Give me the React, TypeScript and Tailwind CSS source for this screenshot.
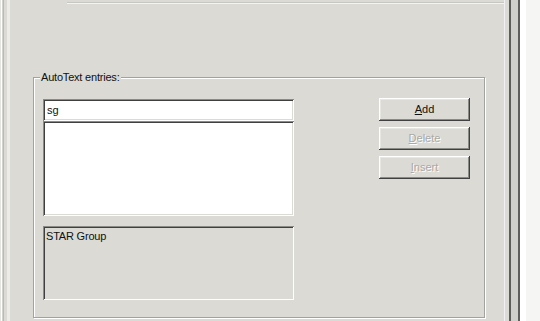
const FONT = "font-['Liberation_Sans',Arial,sans-serif]";

const RAISED =
  "shadow-[inset_-1px_-1px_#404040,inset_1px_1px_#ffffff,inset_-2px_-2px_#8a8a86,inset_2px_2px_#e6e6e2]";
const SUNKEN =
  "shadow-[inset_1px_1px_#8a8a86,inset_-1px_-1px_#ffffff,inset_2px_2px_#404040,inset_-2px_-2px_#dbdad5]";

function Btn({ label, u, rest, disabled }: { label?: string; u: string; rest: string; disabled?: boolean }) {
  return (
    <div
      aria-label={label}
      className={`flex h-[23px] w-[91px] items-center justify-center bg-[#dbdad5] text-[11px] ${RAISED} ${
        disabled ? "text-[#a9a9a5] [text-shadow:1px_1px_0_#ffffff]" : "text-[#111]"
      }`}
    >
      <span>
        <span className="underline underline-offset-1">{u}</span>
        {rest}
      </span>
    </div>
  );
}

export default function App() {
  return (
    <div className={`flex h-[321px] w-[540px] overflow-hidden bg-[#dbdad5] ${FONT}`}>
      {/* left window edge */}
      <div className="flex h-full w-[10px] shrink-0">
        <div className="w-px bg-[#e4e4e1]" />
        <div className="w-px bg-white" />
        <div className="w-px bg-[#d2d2ce]" />
        <div className="w-px bg-[#b9b9b5]" />
        <div className="w-[3px] bg-[#dbdad5]" />
        <div className="w-[3px] bg-[#ecece9]" />
      </div>

      {/* dialog page */}
      <div className="flex h-full w-[495px] shrink-0 flex-col border-r border-[#f1f1ef]">
        <div className="ml-[57px] mt-[2px] h-[2px] border-t border-[#c6c6c2] border-b border-b-[#f3f3f1]" />

        <div className="relative ml-[23px] mt-[73px] h-[241px] w-[452px] border border-[#a2a29e] shadow-[inset_1px_1px_#ffffff,1px_1px_#ffffff]">
          <span className="absolute left-[6px] top-[-8px] bg-[#dbdad5] px-px text-[11px] leading-[14px] tracking-[-0.2px] text-[#111]">
            AutoText entries:
          </span>

          <div className="flex pl-[9px] pt-[20px]">
            <div className="flex w-[251px] flex-col pt-px">
              <div className={`flex h-[22px] items-center bg-white pl-[4px] text-[11px] text-[#111] ${SUNKEN}`}>sg</div>
              <div className={`h-[95px] bg-white ${SUNKEN}`} />
              <div className={`mt-[10px] h-[74px] bg-[#dbdad5] pl-[3px] pt-[3px] text-[11px] leading-[14px] tracking-[-0.2px] text-[#111] ${SUNKEN}`}>
                STAR Group
              </div>
            </div>

            <div className="ml-[85px] flex flex-col gap-[6px]">
              <Btn u="A" rest="dd" />
              <Btn u="D" rest="elete" disabled />
              <Btn u="I" rest="nsert" disabled />
            </div>
          </div>
        </div>
      </div>

      {/* right window edge */}
      <div className="flex h-full flex-1">
        <div className="w-[4px] bg-[#dbdad5]" />
        <div className="w-[2px] bg-[#5c5c5a]" />
        <div className="w-[7px] bg-[#cfcfcb]" />
        <div className="w-[2px] bg-[#5e5e5c]" />
        <div className="w-[6px] bg-white" />
        <div className="flex-1 bg-[#f5f5f4]" />
      </div>
    </div>
  );
}
